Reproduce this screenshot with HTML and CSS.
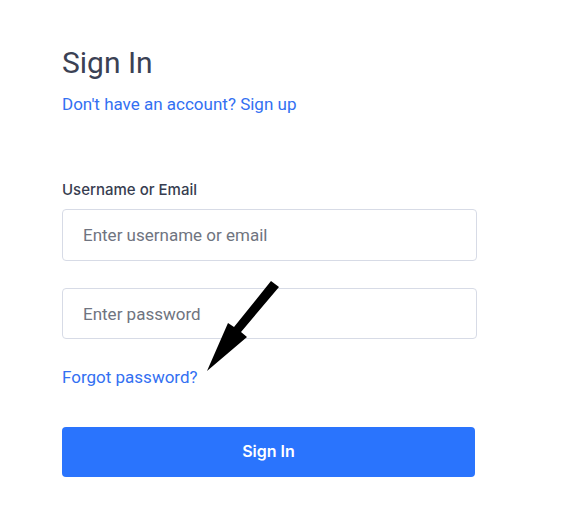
FILE: index.html
```html
<!DOCTYPE html>
<html lang="en">
<head>
    <meta charset="UTF-8">
    <meta name="viewport" content="width=device-width, initial-scale=1.0">
    <title>Sign In</title>
    <link rel="stylesheet" href="styles.css">
</head>
<body>
    <div class="signin">
        <h1>Sign In</h1>
        <a class="signup-link" href="#">Don't have an account? Sign up</a>
        <form id="signinForm">
            <label for="username">Username or Email</label>
            <input type="text" id="username" name="username" placeholder="Enter username or email">
            <input type="password" id="password" name="password" placeholder="Enter password">
            <a class="forgot-link" href="#">Forgot password?</a>
            <button type="button" id="button">Sign In</button>
        </form>

        <!-- annotation arrow pointing at the forgot password link -->
        <svg class="arrow" width="85" height="100" viewBox="0 0 85 100">
            <polygon points="71,3 79,9 41,54 47,59 7,93 28,45 34,49" fill="#000"/>
        </svg>
    </div>
</body>
</html>
```

FILE: styles.css
```css
body {
    font-family: Roboto, "Liberation Sans", sans-serif;
    margin: 0;
    padding: 0;
    background-color: #ffffff;
}
.signin {
    position: relative;
    width: 415px;
    padding: 45px 0 0 62px;
}
h1 {
    margin: 0;
    font-size: 30px;
    font-weight: 400;
    line-height: 36px;
    color: #3b4154;
}
.signup-link, .forgot-link {
    display: block;
    font-size: 17px;
    line-height: 20px;
    color: #3370f2;
    text-decoration: none;
}
.signup-link {
    margin-top: 13px;
}
form {
    display: flex;
    flex-direction: column;
    align-items: flex-start;
}
label {
    margin-top: 67px;
    font-family: Inter, sans-serif;
    font-size: 15px;
    font-weight: 500;
    line-height: 18px;
    color: #373d50;
}
input[type="text"], input[type="password"] {
    width: 100%;
    height: 52px;
    padding: 0 20px;
    border: 1px solid #d7dbe6;
    border-radius: 4px;
    box-sizing: border-box;
    font-family: Roboto, sans-serif;
    font-size: 17px;
    color: #3b4154;
}
input::placeholder {
    color: #6f7480;
}
#username {
    margin-top: 10px;
}
#password {
    margin-top: 27px;
    height: 51px;
}
.forgot-link {
    margin-top: 28px;
}
button[type="button"] {
    width: 413px;
    height: 50px;
    margin-top: 40px;
    padding: 0 0 3px;
    background-color: #2a74fd;
    color: #ffffff;
    border: none;
    border-radius: 4px;
    font-family: Inter, sans-serif;
    font-size: 16px;
    font-weight: 600;
    cursor: pointer;
}
.arrow {
    position: absolute;
    left: 200px;
    top: 278px;
}
```
